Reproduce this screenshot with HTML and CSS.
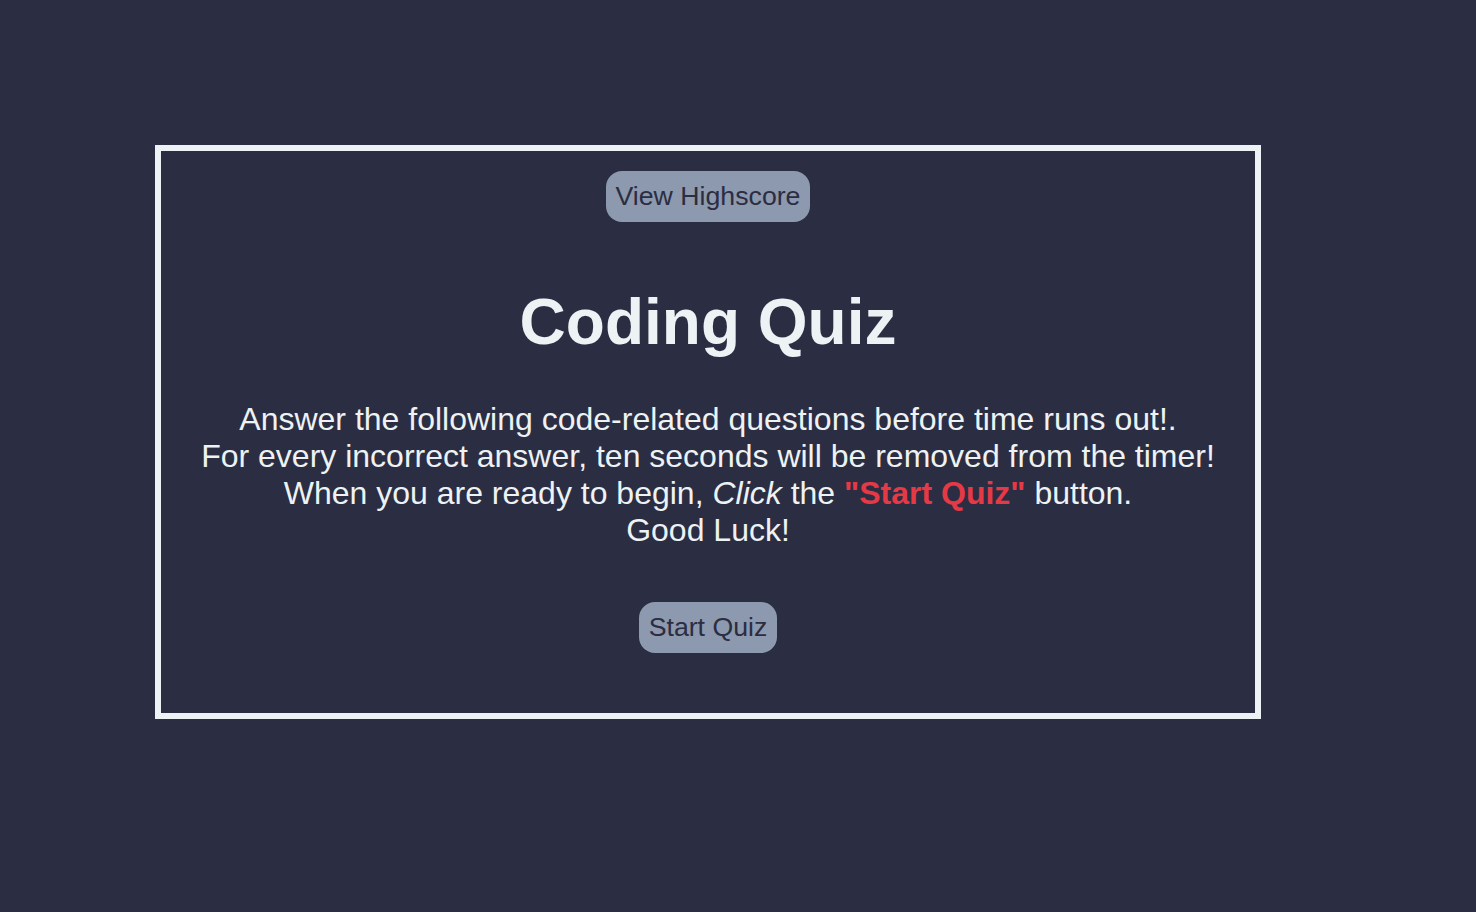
FILE: index.html
```html
<!DOCTYPE html>
<html lang="en">
<head>
<meta charset="utf-8">
<title>Coding Quiz</title>
<link rel="stylesheet" href="styles.css">
</head>
<body>
<main class="card">
  <button class="btn btn-top">View Highscore</button>
  <h1 class="title">Coding Quiz</h1>
  <p class="intro">Answer the following code-related questions before time runs out!.<br>
  For every incorrect answer, ten seconds will be removed from the timer!<br>
  When you are ready to begin, <em>Click</em> the <strong class="hl">"Start Quiz"</strong> button.<br>
  Good Luck!</p>
  <button class="btn btn-start">Start Quiz</button>
</main>
</body>
</html>
```
FILE: styles.css
```css
html, body {
  margin: 0;
  padding: 0;
  background: #2b2d42;
  font-family: "Liberation Sans", Arial, sans-serif;
  color: #edf2f4;
}
body {
  padding: 145px 0 0 155px;
  height: 912px;
  box-sizing: border-box;
}
.card {
  width: 1094px;
  height: 562px;
  border: 6px solid #edf2f4;
  display: flex;
  flex-direction: column;
  align-items: center;
  box-sizing: content-box;
}
.btn {
  font-family: "Liberation Sans", Arial, sans-serif;
  font-size: 26.7px;
  line-height: 31px;
  height: 51px;
  color: #2b2d42;
  background: #8d99ae;
  border: none;
  border-radius: 16px;
  padding: 10px 10px;
  cursor: pointer;
}
.btn-top {
  margin-top: 20px;
}
.title {
  font-size: 64px;
  font-weight: bold;
  line-height: 74px;
  margin: 63px 0 0 0;
}
.intro {
  font-size: 32px;
  line-height: 37px;
  text-align: center;
  margin: 42px 0 0 0;
}
.hl {
  color: #e63946;
}
.btn-start {
  margin-top: 53px;
}
```
